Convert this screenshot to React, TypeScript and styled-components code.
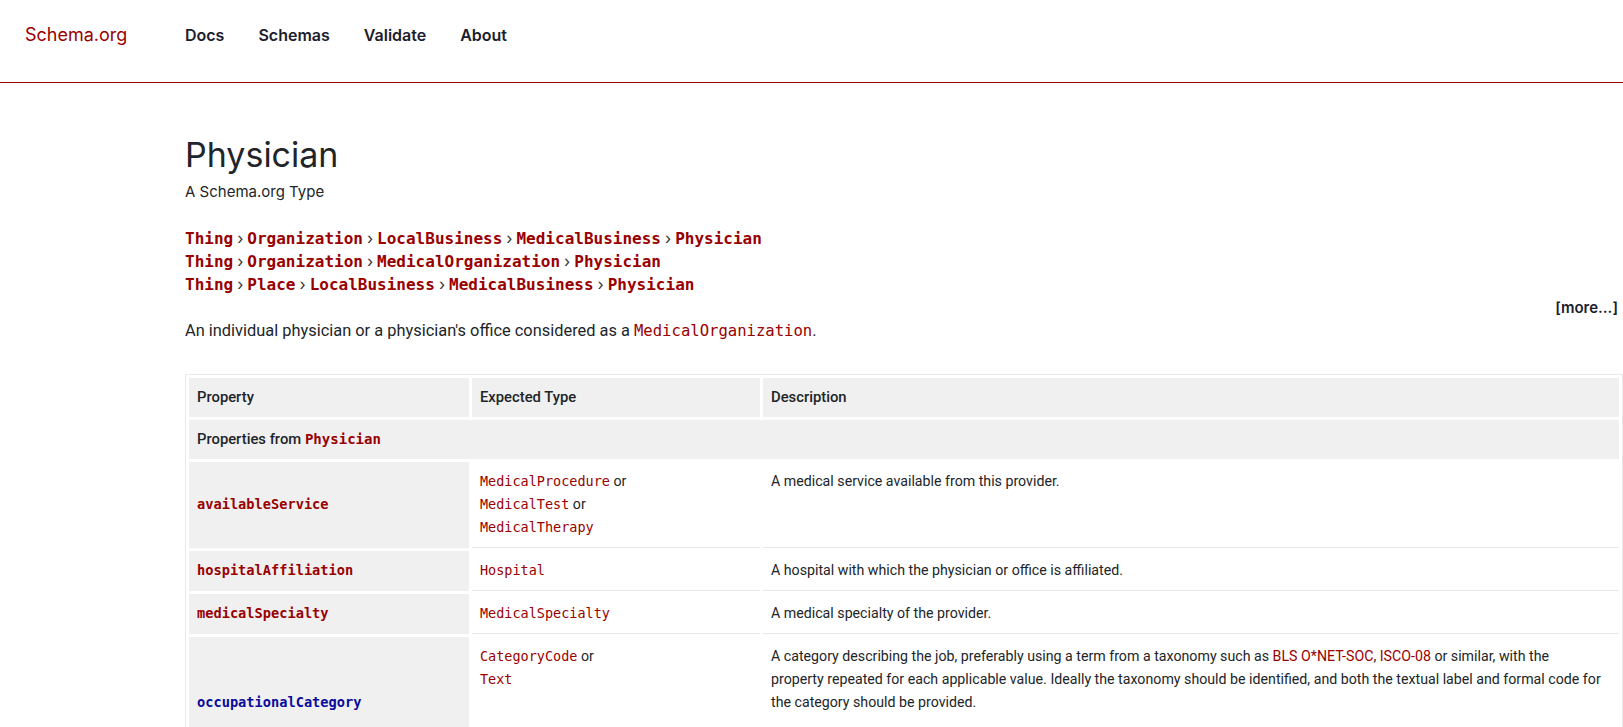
import React from "react";
import styled, { createGlobalStyle } from "styled-components";

const RED = "#990000";
const BLUE = "#0a0a9c";
const INK = "#212529";
const NAVY = "#1c1d2e";
const CELL_GRAY = "#f0f0f0";
const RULE = "#e9e9e9";
const MONO = `"DejaVu Sans Mono", "Liberation Mono", monospace`;
const SANS = `Roboto, "Liberation Sans", sans-serif`;
const HEAD = `Inter, Roboto, "Liberation Sans", sans-serif`;

const GlobalStyle = createGlobalStyle`
  *, *::before, *::after { box-sizing: border-box; }
  html, body { overflow: hidden; }
  body {
    margin: 0;
    background: #fff;
    color: ${INK};
    font-family: ${SANS};
  }
`;

const TopBar = styled.header`
  display: flex;
  align-items: center;
  height: 83px;
  padding: 0 0 13px 25px;
  border-bottom: 1px solid ${RED};
`;

const Logo = styled.a`
  width: 160px;
  font-family: ${HEAD};
  font-size: 18px;
  color: ${RED};
  text-decoration: none;
`;

const Nav = styled.nav`
  display: flex;
  gap: 34px;
`;

const NavLink = styled.a`
  font-family: ${HEAD};
  font-size: 16px;
  font-weight: 600;
  color: ${NAVY};
  text-decoration: none;
`;

const Main = styled.main`
  padding: 52px 0 0 185px;
`;

const Title = styled.h1`
  margin: 0;
  font-family: ${HEAD};
  font-size: 34px;
  font-weight: 400;
  line-height: 40px;
`;

const Subtitle = styled.div`
  margin-top: 7px;
  font-family: ${HEAD};
  font-size: 15px;
  line-height: 20px;
`;

const Breadcrumbs = styled.div`
  margin-top: 26px;
`;

const Trail = styled.div`
  font-family: ${MONO};
  font-size: 16px;
  font-weight: 700;
  line-height: 22.8px;
  color: ${RED};
`;

const Sep = styled.span`
  font-family: ${HEAD};
  font-weight: 400;
  line-height: 1;
  color: #333;
  padding: 0 4px;
`;

const More = styled.div`
  padding-right: 5px;
  text-align: right;
  font-family: ${HEAD};
  font-size: 15px;
  font-weight: 600;
  line-height: 23px;
  color: ${NAVY};
`;

const Lead = styled.p`
  margin: 0 0 32px;
  font-size: 16.4px;
  line-height: 23px;
`;

const Code = styled.code<{ $bold?: boolean; $blue?: boolean }>`
  font-family: ${MONO};
  font-size: 0.95em;
  line-height: 1;
  font-weight: ${(p) => (p.$bold ? 700 : 400)};
  color: ${(p) => (p.$blue ? BLUE : RED)};
`;

const Table = styled.table`
  width: 100%;
  border: 1px solid ${RULE};
  border-spacing: 3px;
  font-size: 14.2px;
  line-height: 23px;
`;

const HeadCell = styled.th<{ $w?: number }>`
  width: ${(p) => (p.$w ? `${p.$w}px` : "auto")};
  padding: 8px;
  background: ${CELL_GRAY};
  text-align: left;
  font-size: 14.8px;
  font-weight: 500;
  line-height: 22.5px;
`;

const SectionCell = styled.td`
  padding: 8px;
  background: ${CELL_GRAY};
  font-size: 14.8px;
  font-weight: 500;
`;

const PropCell = styled.th`
  padding: 8px;
  background: ${CELL_GRAY};
  text-align: left;
  vertical-align: middle;
  font-size: 14.4px;
  font-weight: 400;
`;

const BodyCell = styled.td`
  padding: 8px;
  vertical-align: top;
  border-bottom: 1px solid ${RULE};
`;

const Link = styled.a`
  color: ${RED};
  text-decoration: none;
`;

const trails = [
  ["Thing", "Organization", "LocalBusiness", "MedicalBusiness", "Physician"],
  ["Thing", "Organization", "MedicalOrganization", "Physician"],
  ["Thing", "Place", "LocalBusiness", "MedicalBusiness", "Physician"],
];

type Prop = {
  name: string;
  types: string[];
  desc: React.ReactNode;
  blue?: boolean;
};

const props: Prop[] = [
  {
    name: "availableService",
    types: ["MedicalProcedure", "MedicalTest", "MedicalTherapy"],
    desc: "A medical service available from this provider.",
  },
  {
    name: "hospitalAffiliation",
    types: ["Hospital"],
    desc: "A hospital with which the physician or office is affiliated.",
  },
  {
    name: "medicalSpecialty",
    types: ["MedicalSpecialty"],
    desc: "A medical specialty of the provider.",
  },
  {
    name: "occupationalCategory",
    types: ["CategoryCode", "Text"],
    blue: true,
    desc: (
      <>
        A category describing the job, preferably using a term from a taxonomy such as{" "}
        <Link href="#">BLS O*NET-SOC</Link>, <Link href="#">ISCO-08</Link> or similar, with the
        <br />
        property repeated for each applicable value. Ideally the taxonomy should be identified, and
        both the textual label and formal code for the category should be provided.
        <br />
        <br />
        Note: for historical reasons, any textual label and formal code provided as a literal may be
        assumed to be from O*NET-SOC.
      </>
    ),
  },
];

export default function App() {
  return (
    <>
      <GlobalStyle />
      <TopBar>
        <Logo href="#">Schema.org</Logo>
        <Nav>
          <NavLink href="#">Docs</NavLink>
          <NavLink href="#">Schemas</NavLink>
          <NavLink href="#">Validate</NavLink>
          <NavLink href="#">About</NavLink>
        </Nav>
      </TopBar>
      <Main>
        <Title>Physician</Title>
        <Subtitle>A Schema.org Type</Subtitle>
        <Breadcrumbs>
          {trails.map((t, i) => (
            <Trail key={i}>
              {t.map((step, j) => (
                <React.Fragment key={j}>
                  {j > 0 && <Sep>›</Sep>}
                  {step}
                </React.Fragment>
              ))}
            </Trail>
          ))}
        </Breadcrumbs>
        <More>[more...]</More>
        <Lead>
          An individual physician or a physician's office considered as a{" "}
          <Code>MedicalOrganization</Code>.
        </Lead>
        <Table>
          <thead>
            <tr>
              <HeadCell $w={280}>Property</HeadCell>
              <HeadCell $w={288}>Expected Type</HeadCell>
              <HeadCell>Description</HeadCell>
            </tr>
          </thead>
          <tbody>
            <tr>
              <SectionCell colSpan={3}>
                Properties from <Code $bold>Physician</Code>
              </SectionCell>
            </tr>
            {props.map((p) => (
              <tr key={p.name}>
                <PropCell>
                  <Code $bold $blue={p.blue}>
                    {p.name}
                  </Code>
                </PropCell>
                <BodyCell>
                  {p.types.map((t, i) => (
                    <React.Fragment key={t}>
                      {i > 0 && <br />}
                      <Code>{t}</Code>
                      {i < p.types.length - 1 && " or"}
                    </React.Fragment>
                  ))}
                </BodyCell>
                <BodyCell>{p.desc}</BodyCell>
              </tr>
            ))}
          </tbody>
        </Table>
      </Main>
    </>
  );
}
